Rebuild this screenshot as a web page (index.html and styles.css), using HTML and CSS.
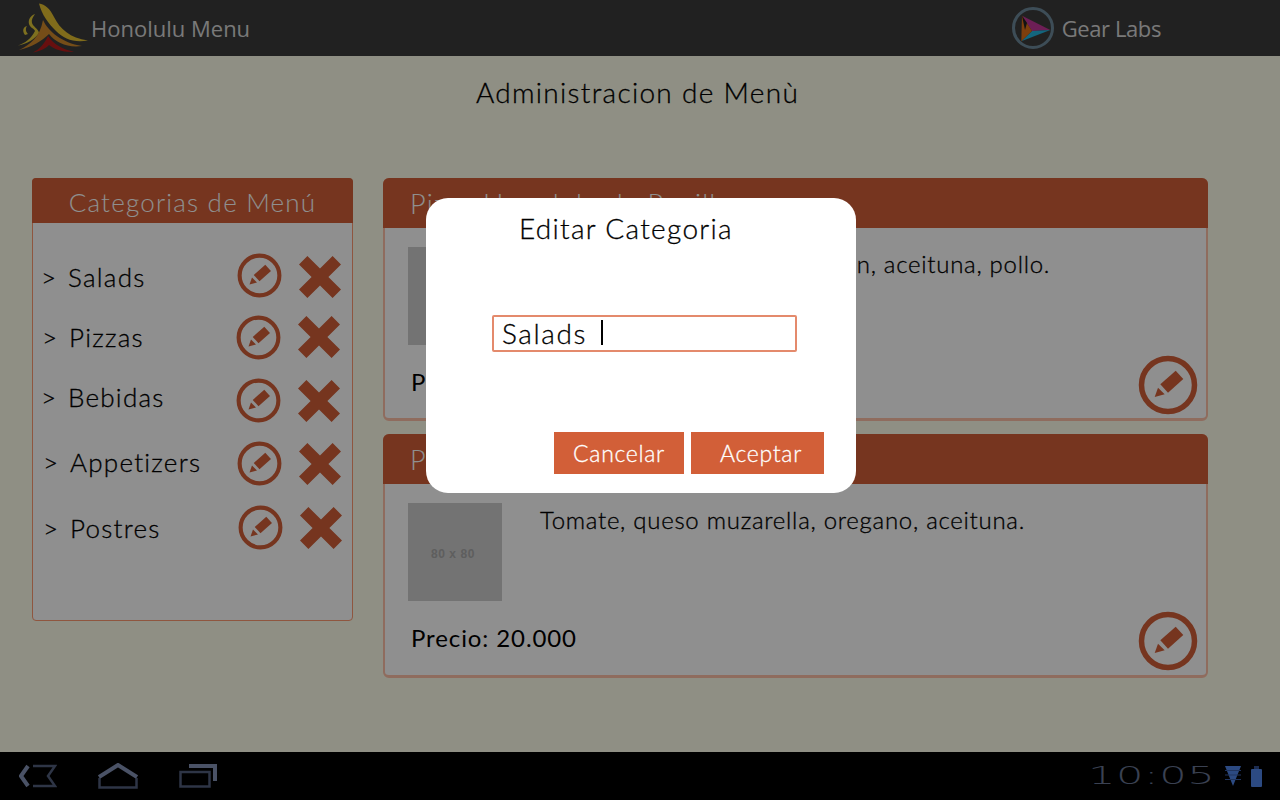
FILE: index.html
```html
<!DOCTYPE html>
<html lang="es">
<head>
    <meta charset="UTF-8">
    <meta name="viewport" content="width=device-width, initial-scale=1.0">
    <title>Honolulu Menu</title>
    <link rel="stylesheet" href="styles.css">
</head>
<body>
    <svg class="sprites" width="0" height="0">
        <symbol id="icon-edit" viewBox="0 0 60 60">
            <circle cx="30" cy="30" r="26.5" fill="none" stroke="currentColor" stroke-width="5.5"/>
            <polygon points="37.7,15.7 45.3,24 30,37.7 22.3,29.3" fill="currentColor"/>
            <polygon points="16.7,42 20,32.7 26.7,39.3" fill="currentColor"/>
        </symbol>
        <symbol id="icon-delete" viewBox="0 0 40 40">
            <polygon points="8,0 20,12 32,0 40,8 28,20 40,32 32,40 20,28 8,40 0,32 12,20 0,8" fill="currentColor"/>
        </symbol>
    </svg>

    <div class="screen">
        <header class="topbar">
            <div class="brand">
                <svg class="brand-logo" viewBox="0 0 72 50">
                    <path d="M21 .5 C27 1 32 6 36 14 C42 26 52 35 70 37.5 C56 40 46 36 38 28 C30 20 24 12 21 .5Z" fill="#e5c030"/>
                    <path d="M17 11 C12 13 10 17 11 21 C12 25 16 25 17 28 C13 36 7 40 0 42.5 C9 41 17 36 21 30 C20 25 15 24 14 20 C13 17 15 14 17 11Z" fill="#e0c838"/>
                    <path d="M7 32 C4 28 5 24 9 23 C7 26 8 29 10 31Z" fill="#e0c838"/>
                    <path d="M25 17 C30 28 44 40 64 43 C50 45 38 40 31 31 C24 38 14 44 1 47 C12 42 22 34 25 17Z" fill="#d08a2c"/>
                    <path d="M30 33 C36 42 46 47 56 48.5 C46 50 36 46 31 42 C27 46 22 48 15 49.5 C22 46 27 40 30 33Z" fill="#b81c1c"/>
                </svg>
                <span class="brand-name">Honolulu Menu</span>
            </div>
            <div class="partner">
                <svg class="partner-logo" viewBox="0 0 44 44">
                    <circle cx="22" cy="22" r="19.5" fill="none" stroke="#6e8a9c" stroke-width="3"/>
                    <polygon points="11,9.7 39.3,24 21,25" fill="#c2379a"/>
                    <polygon points="21,25 39.3,24 10.3,35.3" fill="#22b6e0"/>
                    <polygon points="11,9.7 21,25 10.3,35.3" fill="#e07018"/>
                    <polygon points="11,9.7 16,17 14,24" fill="#202020"/>
                </svg>
                <span class="partner-name">Gear Labs</span>
            </div>
        </header>

        <main class="content">
            <h1 class="page-title">Administracion de Menù</h1>
            <div class="columns">
                <section class="categories">
                    <h2 class="categories-head">Categorias de Menú</h2>
                    <ul class="cat-list">
                        <li class="cat-row">
                            <span class="cat-arrow">&gt;</span><span class="cat-name">Salads</span>
                            <svg class="cat-edit"><use href="#icon-edit"/></svg>
                            <svg class="cat-delete"><use href="#icon-delete"/></svg>
                        </li>
                        <li class="cat-row">
                            <span class="cat-arrow">&gt;</span><span class="cat-name">Pizzas</span>
                            <svg class="cat-edit"><use href="#icon-edit"/></svg>
                            <svg class="cat-delete"><use href="#icon-delete"/></svg>
                        </li>
                        <li class="cat-row">
                            <span class="cat-arrow">&gt;</span><span class="cat-name">Bebidas</span>
                            <svg class="cat-edit"><use href="#icon-edit"/></svg>
                            <svg class="cat-delete"><use href="#icon-delete"/></svg>
                        </li>
                        <li class="cat-row">
                            <span class="cat-arrow">&gt;</span><span class="cat-name">Appetizers</span>
                            <svg class="cat-edit"><use href="#icon-edit"/></svg>
                            <svg class="cat-delete"><use href="#icon-delete"/></svg>
                        </li>
                        <li class="cat-row">
                            <span class="cat-arrow">&gt;</span><span class="cat-name">Postres</span>
                            <svg class="cat-edit"><use href="#icon-edit"/></svg>
                            <svg class="cat-delete"><use href="#icon-delete"/></svg>
                        </li>
                    </ul>
                </section>

                <div class="dishes">
                    <article class="dish">
                        <h2 class="dish-head">Pizza Honolulu de Pepillo</h2>
                        <div class="dish-body">
                            <div class="dish-main">
                                <div class="dish-photo">80 x 80</div>
                                <p class="dish-desc">Tomate, muzarella, champiñon, aceituna, pollo.</p>
                            </div>
                            <div class="dish-foot">
                                <span class="dish-price">Precio: 25.000</span>
                                <svg class="dish-edit"><use href="#icon-edit"/></svg>
                            </div>
                        </div>
                    </article>
                    <article class="dish">
                        <h2 class="dish-head">Pizza Margarita</h2>
                        <div class="dish-body">
                            <div class="dish-main">
                                <div class="dish-photo">80 x 80</div>
                                <p class="dish-desc">Tomate, queso muzarella, oregano, aceituna.</p>
                            </div>
                            <div class="dish-foot">
                                <span class="dish-price">Precio: 20.000</span>
                                <svg class="dish-edit"><use href="#icon-edit"/></svg>
                            </div>
                        </div>
                    </article>
                </div>
            </div>
        </main>

        <div class="scrim"></div>

        <div class="dialog">
            <h2 class="dialog-title">Editar Categoria</h2>
            <div class="dialog-field"><span class="dialog-value">Salads</span><span class="dialog-caret"></span></div>
            <div class="dialog-actions">
                <button class="dialog-btn dialog-btn-cancel">Cancelar</button>
                <button class="dialog-btn dialog-btn-ok">Aceptar</button>
            </div>
        </div>
    </div>

    <footer class="navbar">
        <div class="nav-buttons">
            <svg class="nav-back" viewBox="0 0 38 24">
                <path d="M9 2 L2 12 L9 22" fill="none" stroke="#4a5266" stroke-width="4"/>
                <path d="M14 2 H36 L29 12 L36 22 H14" fill="none" stroke="#2e3546" stroke-width="2.5"/>
            </svg>
            <svg class="nav-home" viewBox="0 0 40 26">
                <path d="M1 14 L20 2 L39 14" fill="none" stroke="#4a5266" stroke-width="4"/>
                <path d="M1.5 15 V24.5 H38.5 V15" fill="none" stroke="#2e3546" stroke-width="2.5"/>
            </svg>
            <svg class="nav-recent" viewBox="0 0 38 24">
                <path d="M10 2 H36 V17" fill="none" stroke="#4a5266" stroke-width="4"/>
                <rect x="1.5" y="8" width="29" height="14.5" fill="none" stroke="#2e3546" stroke-width="2.5"/>
            </svg>
        </div>
        <div class="nav-status">
            <span class="nav-clock">10:05</span>
            <svg class="nav-wifi" viewBox="0 0 16 20">
                <polygon points="0,0 16,0 8,20" fill="#2c4a82"/>
                <path d="M0 4.5 H16 M0 9 H16 M0 13.5 H16" stroke="#20345e" stroke-width="1"/>
            </svg>
            <svg class="nav-battery" viewBox="0 0 11 21">
                <rect x="3" y="0" width="5" height="3" fill="#1c2c50"/>
                <rect x="0" y="3" width="11" height="18" rx="1" fill="#2c4a82"/>
            </svg>
        </div>
    </footer>
</body>
</html>
```

FILE: styles.css
```css
* {
    box-sizing: border-box;
}
body {
    margin: 0;
    width: 1280px;
    height: 800px;
    overflow: hidden;
    display: flex;
    flex-direction: column;
    font-family: Lato, "Open Sans", sans-serif;
    font-weight: 300;
    color: #000;
    background-color: #000;
    -webkit-text-stroke: 0.3px currentColor;
}
h1, h2, p, ul {
    margin: 0;
    padding: 0;
    font-weight: inherit;
}
.sprites {
    position: absolute;
}

.screen {
    position: relative;
    height: 752px;
    background-color: #ffffeb;
}

/* top bar */
.topbar {
    height: 56px;
    padding: 0 119px 0 18px;
    display: flex;
    justify-content: space-between;
    align-items: center;
    background-color: #3c3c3c;
    color: #d8d8d8;
    font-family: "Open Sans", sans-serif;
    font-weight: 400;
    font-size: 22px;
    -webkit-text-stroke: 0;
}
.brand, .partner {
    display: flex;
    align-items: center;
}
.brand-logo {
    width: 72px;
    height: 50px;
    margin-right: 1px;
}
.partner-logo {
    width: 44px;
    height: 44px;
    margin-right: 7px;
}
.partner-name {
    letter-spacing: -0.4px;
}

.page-title {
    margin: 18px 0 0 -5px;
    height: 36px;
    line-height: 36px;
    text-align: center;
    font-size: 28px;
    letter-spacing: 1.3px;
}
.columns {
    margin-top: 68px;
    padding-left: 32px;
    display: flex;
    gap: 30px;
}

/* categories panel */
.categories {
    width: 321px;
    height: 443px;
    background-color: #fff;
    border: 1px solid #ff9a70;
    border-radius: 4px;
}
.categories-head {
    height: 45px;
    margin: -1px -1px 0;
    line-height: 48px;
    text-align: center;
    font-size: 26px;
    letter-spacing: 1.2px;
    color: #fff;
    background-color: #d25f38;
    border-radius: 4px 4px 0 0;
    -webkit-text-stroke: 0;
}
.cat-list {
    list-style: none;
    padding-top: 32px;
}
.cat-row {
    height: 44px;
    margin-bottom: 16px;
    padding-left: 10px;
    display: flex;
    align-items: center;
    font-size: 26px;
    letter-spacing: 1.25px;
}
.cat-arrow {
    margin-left: -2px;
    flex: 0 0 27px;
}
.cat-name {
    width: 169px;
}
.cat-edit {
    width: 45px;
    height: 45px;
    color: #d25f38;
}
.cat-delete {
    width: 42px;
    height: 42px;
    margin-left: 17px;
    color: #d25f38;
}
.cat-row:nth-child(1) .cat-edit { margin-bottom: 4px; }
.cat-row:nth-child(2) { padding-left: 11px; }
.cat-row:nth-child(2) .cat-name { width: 167px; }
.cat-row:nth-child(3) { margin-bottom: 21px; }
.cat-row:nth-child(3) .cat-name { width: 168px; }
.cat-row:nth-child(3) .cat-edit { margin-top: 6px; }
.cat-row:nth-child(3) .cat-delete { margin-top: 8px; }
.cat-row:nth-child(4) { padding-left: 12px; margin-bottom: 22px; }
.cat-row:nth-child(4) .cat-name { width: 167px; }
.cat-row:nth-child(4) .cat-edit { margin-top: 2px; }
.cat-row:nth-child(4) .cat-delete { margin-top: 4px; }
.cat-row:nth-child(5) { padding-left: 12px; }
.cat-row:nth-child(5) .cat-name { width: 168px; }
.cat-row:nth-child(5) .cat-edit { margin-bottom: 2px; }

/* dish cards */
.dishes {
    width: 825px;
    display: flex;
    flex-direction: column;
    gap: 13px;
}
.dish {
    height: 243px;
    background-color: #fff;
    border: 2px solid #ffc0a8;
    border-bottom-width: 3px;
    border-radius: 6px;
}
.dish:last-child {
    height: 244px;
}
.dish-head {
    height: 50px;
    margin: -2px -2px 0;
    padding-left: 27px;
    line-height: 52px;
    font-size: 27px;
    letter-spacing: 1.2px;
    color: #fff;
    background-color: #d25f38;
    border-radius: 6px 6px 0 0;
    -webkit-text-stroke: 0;
}
.dish-main {
    display: flex;
    padding: 19px 0 0 23px;
}
.dish-photo {
    width: 94px;
    height: 98px;
    padding: 4px 4px 0 0;
    display: flex;
    align-items: center;
    justify-content: center;
    background-color: #cdcdcd;
    color: #a8a8a8;
    font-family: "Liberation Sans", sans-serif;
    font-size: 12px;
    font-weight: bold;
    letter-spacing: 0.6px;
    -webkit-text-stroke: 0;
}
.dish-desc {
    margin: 2px 0 0 38px;
    font-size: 24px;
    line-height: 30px;
    letter-spacing: 0.72px;
}
.dish-foot {
    display: flex;
    justify-content: space-between;
    align-items: center;
    margin-top: 10px;
    padding: 0 8px 0 26px;
}
.dish-price {
    font-size: 24px;
    font-weight: 400;
    letter-spacing: 0.9px;
    margin-bottom: 8px;
    -webkit-text-stroke: 0;
}
.dish-edit {
    width: 60px;
    height: 60px;
    color: #d25f38;
}

/* dimmed background and edit dialog */
.scrim {
    position: absolute;
    inset: 0;
    background-color: rgba(0, 0, 0, 0.44);
}
.dialog {
    position: absolute;
    left: 426px;
    top: 198px;
    width: 430px;
    height: 295px;
    padding: 13px 32px 19px 66px;
    display: flex;
    flex-direction: column;
    background-color: #fff;
    border-radius: 22px;
}
.dialog-title {
    margin-left: 27px;
    height: 34px;
    line-height: 34px;
    font-size: 28px;
    letter-spacing: 1.3px;
}
.dialog-field {
    width: 305px;
    height: 37px;
    margin-top: 70px;
    padding: 0 0 2px 8px;
    display: flex;
    align-items: center;
    border: 2px solid #e48a6c;
    border-radius: 2px;
    font-size: 28px;
    letter-spacing: 1.6px;
}
.dialog-caret {
    width: 2px;
    height: 25px;
    margin-left: 14px;
    background-color: #000;
}
.dialog-actions {
    margin-top: auto;
    display: flex;
    justify-content: flex-end;
    gap: 7px;
}
.dialog-btn {
    height: 42px;
    padding: 0;
    border: none;
    background-color: #d25f38;
    color: #fff;
    font-family: inherit;
    font-weight: 300;
    font-size: 23px;
    letter-spacing: 0.7px;
}
.dialog-btn-cancel {
    width: 130px;
}
.dialog-btn-ok {
    width: 133px;
    padding-left: 7px;
}

/* system bar */
.navbar {
    height: 48px;
    padding: 0 18px 0 19px;
    display: flex;
    justify-content: space-between;
    align-items: center;
    background-color: #000;
}
.nav-buttons, .nav-status {
    display: flex;
    align-items: center;
}
.nav-back {
    width: 38px;
    height: 24px;
}
.nav-home {
    width: 40px;
    height: 26px;
    margin-left: 41px;
}
.nav-recent {
    width: 38px;
    height: 24px;
    margin-left: 41px;
}
.nav-clock {
    width: 126px;
    font-family: "DejaVu Sans", sans-serif;
    font-size: 24px;
    font-weight: 200;
    letter-spacing: 0.3px;
    color: #3a4152;
    transform: scaleX(1.8);
    transform-origin: left center;
    -webkit-text-stroke: 0;
}
.nav-wifi {
    width: 16px;
    height: 20px;
    margin-left: 11px;
}
.nav-battery {
    width: 11px;
    height: 21px;
    margin-left: 10px;
}
```
